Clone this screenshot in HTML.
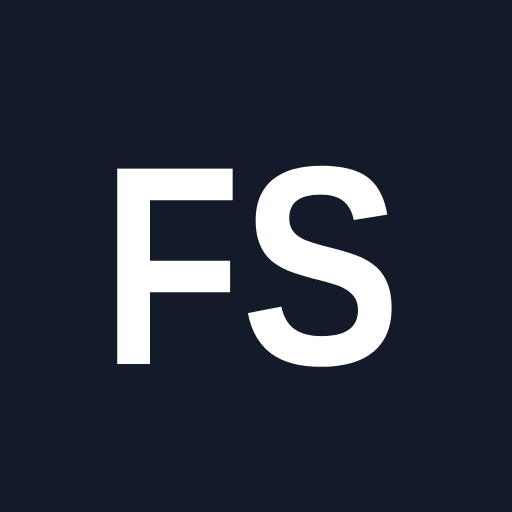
<!DOCTYPE html>
<html><head><style>
html,body{margin:0;padding:0;background:#131a2a;width:512px;height:512px;overflow:hidden}
</style></head><body>
<svg width="512" height="512" xmlns="http://www.w3.org/2000/svg">
<rect width="512" height="512" fill="#131a2a"/>
<g fill="#fff" font-family="Liberation Sans, Arial, sans-serif" font-weight="bold" font-size="284">
<text x="102" y="364" textLength="139" lengthAdjust="spacingAndGlyphs">F</text>
<text x="241" y="364" textLength="160" lengthAdjust="spacingAndGlyphs">S</text>
</g>
</svg>
</body></html>
